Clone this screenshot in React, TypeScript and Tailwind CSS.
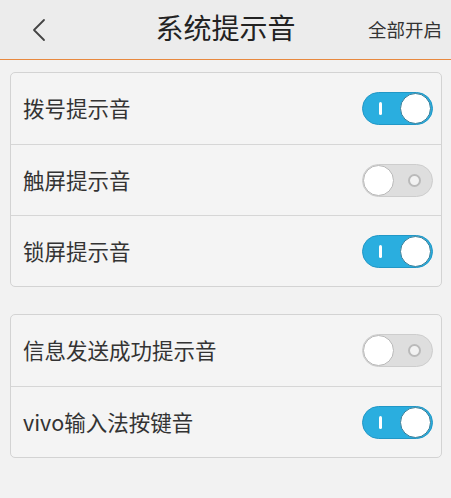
import React, { useState } from 'react';

type Item = { label: string; on: boolean };

function Toggle({ on, onClick }: { on: boolean; onClick: () => void }) {
  if (on) {
    return (
      <button
        onClick={onClick}
        className="relative w-[71px] h-[33px] rounded-full bg-[#2aaedf] border border-[#2197c6] flex items-center justify-end pr-[1px]"
      >
        <span className="absolute left-[16px] top-[9px] w-[3px] h-[13px] bg-white rounded-sm" />
        <span className="w-[31px] h-[31px] rounded-full bg-white border-[1.5px] border-[#3c7f99]" />
      </button>
    );
  }
  return (
    <button
      onClick={onClick}
      className="relative w-[71px] h-[33px] rounded-full bg-[#dedede] border border-[#cdcdcd] flex items-center"
    >
      <span className="w-[31px] h-[31px] rounded-full bg-white border border-[#b9b9b9]" />
      <span className="absolute right-[11px] top-[9px] w-[13px] h-[13px] rounded-full bg-[#f2f2f2] border-[2.5px] border-[#bababa]" />
    </button>
  );
}

function Card({ items, onToggle, offset }: { items: Item[]; onToggle: (i: number) => void; offset: number }) {
  return (
    <div className="ml-[10px] mr-[9px] rounded-[5px] border border-[#d3d3d3] bg-[#f4f4f4]">
      {items.map((it, i) => (
        <div
          key={it.label}
          className={`h-[71px] flex items-center justify-between pl-[12px] pr-[8px] ${i > 0 ? 'border-t border-[#d6d6d6]' : ''}`}
        >
          <span className="text-[21.5px] text-[#333333]">{it.label}</span>
          <Toggle on={it.on} onClick={() => onToggle(offset + i)} />
        </div>
      ))}
    </div>
  );
}

export default function App() {
  const [items, setItems] = useState<Item[]>([
    { label: '拨号提示音', on: true },
    { label: '触屏提示音', on: false },
    { label: '锁屏提示音', on: true },
    { label: '信息发送成功提示音', on: false },
    { label: 'vivo输入法按键音', on: true },
  ]);
  const toggle = (i: number) =>
    setItems((prev) => prev.map((it, j) => (j === i ? { ...it, on: !it.on } : it)));

  return (
    <div
      className="w-[451px] h-[498px] bg-[#f2f2f2] overflow-hidden"
      style={{ fontFamily: '"Noto Sans CJK SC", "Noto Sans", sans-serif' }}
    >
      <header className="h-[60px] bg-[#ececec] border-b-[1.5px] border-[#e8893f] flex items-center relative">
        <button className="w-[80px] h-full flex items-center pl-[32px]">
          <svg width="14" height="24" viewBox="0 0 14 24" fill="none">
            <path d="M12 2 L2 12 L12 22" stroke="#444" strokeWidth="1.8" strokeLinecap="round" strokeLinejoin="round" />
          </svg>
        </button>
        <h1 className="absolute left-0 right-0 text-center text-[28px] text-[#222] pointer-events-none leading-none top-[13px]">
          系统提示音
        </h1>
        <span className="ml-auto mr-[9px] text-[18.5px] text-[#333]">全部开启</span>
      </header>
      <div className="pt-[12px]">
        <Card items={items.slice(0, 3)} onToggle={toggle} offset={0} />
      </div>
      <div className="pt-[27px]">
        <Card items={items.slice(3)} onToggle={toggle} offset={3} />
      </div>
    </div>
  );
}
